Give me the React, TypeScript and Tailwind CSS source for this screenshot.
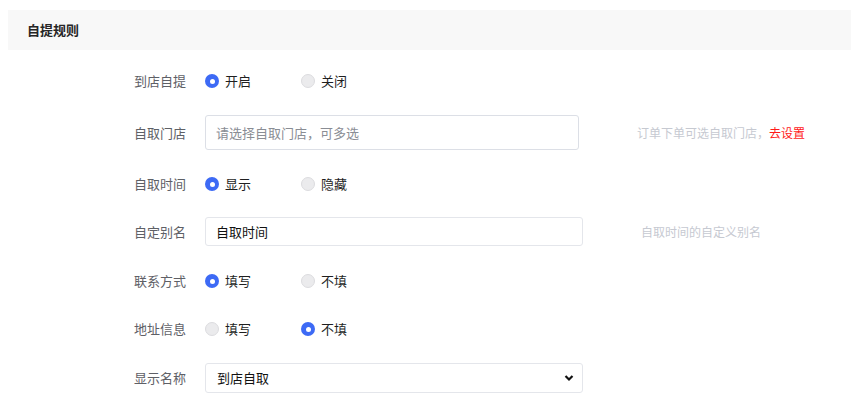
import React from 'react';

const FONT = { fontFamily: '"Noto Sans CJK SC", "Noto Sans", sans-serif' };

interface RadioProps {
    checked: boolean;
    label: string;
}

const Radio: React.FC<RadioProps> = ({ checked, label }) => (
    <label className="flex items-center cursor-pointer">
        {checked ? (
            <span className="w-[14px] h-[14px] rounded-full bg-[#3d6af5] flex items-center justify-center">
                <span className="w-[5px] h-[5px] rounded-full bg-white"></span>
            </span>
        ) : (
            <span className="w-[14px] h-[14px] rounded-full bg-[#ebebed] border border-[#dcdcdf]"></span>
        )}
        <span className="ml-[6px] text-[13px] text-[#1f1f1f]">{label}</span>
    </label>
);

const RadioPair: React.FC<{ options: string[]; value: number }> = ({ options, value }) => (
    <div className="flex items-center">
        <div className="w-[96px]">
            <Radio checked={value === 0} label={options[0]} />
        </div>
        <Radio checked={value === 1} label={options[1]} />
    </div>
);

const Row: React.FC<{ label: string; className: string; children: React.ReactNode }> = ({ label, className, children }) => (
    <div className={`flex items-center ${className}`}>
        <div className="w-[187px] text-right text-[13px] text-[#5e6066] pr-[1px]">{label}</div>
        <div className="ml-[18px] flex items-center">{children}</div>
    </div>
);

const App: React.FC = () => {
    return (
        <div className="w-[859px] h-[401px] bg-white overflow-hidden" style={FONT}>
            <div className="mx-2 mt-[10px] h-10 bg-[#f8f8f8] flex items-center pl-[19px]">
                <span className="text-[13px] font-bold text-[#262626]">自提规则</span>
            </div>

            <Row label="到店自提" className="mt-[21px] h-5">
                <RadioPair options={['开启', '关闭']} value={0} />
            </Row>

            <Row label="自取门店" className="mt-[24px] h-[35px]">
                <div className="w-[374px] h-[35px] border border-[#dcdfe6] rounded-[3px] flex items-center px-[10px]">
                    <span className="text-[13px] text-[#8a8d94]">请选择自取门店，可多选</span>
                </div>
                <span className="ml-[58px] text-[12px] text-[#c6c9d1]">
                    订单下单可选自取门店，<span className="text-[#ff1a1a]">去设置</span>
                </span>
            </Row>

            <Row label="自取时间" className="mt-[24px] h-5">
                <RadioPair options={['显示', '隐藏']} value={0} />
            </Row>

            <Row label="自定别名" className="mt-[23px] h-[29px]">
                <div className="w-[378px] h-[29px] border border-[#e4e6eb] rounded-[3px] flex items-center px-[10px]">
                    <span className="text-[13px] text-[#111]">自取时间</span>
                </div>
                <span className="ml-[58px] text-[12px] text-[#c6c9d1]">自取时间的自定义别名</span>
            </Row>

            <Row label="联系方式" className="mt-[25px] h-5">
                <RadioPair options={['填写', '不填']} value={0} />
            </Row>

            <Row label="地址信息" className="mt-[28px] h-5">
                <RadioPair options={['填写', '不填']} value={1} />
            </Row>

            <Row label="显示名称" className="mt-[24px] h-[30px]">
                <div className="w-[378px] h-[30px] border border-[#e4e6eb] rounded-[3px] flex items-center justify-between pl-[11px] pr-[8px]">
                    <span className="text-[13px] text-[#111]">到店自取</span>
                    <svg width="10" height="8" viewBox="0 0 10 8">
                        <path d="M1.5 2 L5 5.5 L8.5 2" fill="none" stroke="#111" strokeWidth="2.2" />
                    </svg>
                </div>
            </Row>
        </div>
    );
};

export default App;
